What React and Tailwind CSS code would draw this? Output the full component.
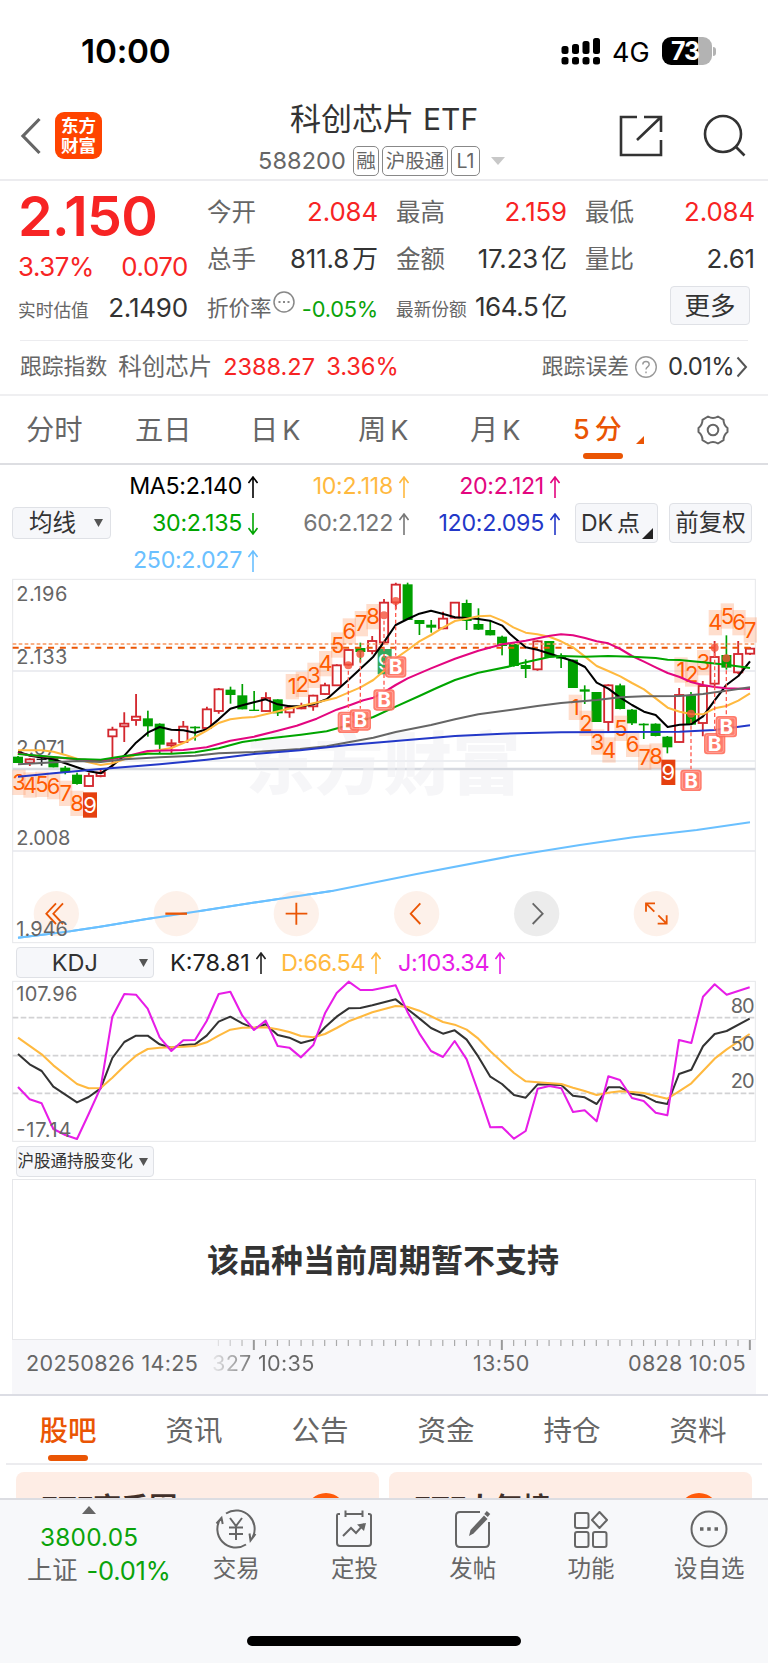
import clsx from 'clsx';

const STEP = 35.42;
const xAt = (i) => 54 + STEP * i;

// [kind, high, top, bottom, low]
const candles = [
  ['g', 558, 560, 579, 579], ['r', 565, 567, 579, 588], ['k', 558, 566, 570, 587], ['g', 560, 563, 592, 592],
  ['g', 588, 593, 607, 613], ['g', 608, 614, 642, 644], ['r', 608, 617, 649, 651], ['r', 600, 607, 619, 622],
  ['r', 470, 478, 500, 590], ['r', 427, 460, 470, 516], ['r', 372, 439, 451, 467], ['g', 422, 445, 469, 500],
  ['g', 460, 461, 524, 550], ['r', 508, 519, 527, 552], ['r', 453, 469, 517, 519], ['g', 469, 470, 475, 512],
  ['r', 410, 417, 475, 478], ['r', 354, 357, 424, 431], ['g', 350, 359, 375, 401], ['g', 342, 376, 418, 418],
  ['g', 363, 419, 423, 423], ['r', 367, 383, 424, 426], ['g', 388, 388, 430, 438], ['r', 405, 412, 428, 443],
  ['r', 398, 409, 416, 418], ['r', 374, 376, 410, 422], ['r', 338, 345, 373, 375], ['r', 283, 285, 347, 348],
  ['r', 236, 239, 285, 287], ['g', 218, 234, 246, 277], ['r', 198, 212, 244, 253], ['r', 87, 97, 218, 220],
  ['r', 38, 43, 98, 118], ['g', 38, 43, 150, 150], ['g', 150, 150, 162, 195], ['g', 150, 164, 173, 188],
  ['r', 125, 145, 176, 178], ['r', 96, 97, 144, 146], ['g', 89, 99, 153, 180], ['g', 115, 162, 179, 180],
  ['g', 152, 180, 196, 196], ['g', 197, 200, 228, 256], ['g', 220, 222, 288, 290], ['g', 268, 285, 297, 324],
  ['r', 211, 213, 299, 302], ['g', 213, 213, 262, 263], ['g', 250, 261, 266, 294], ['g', 269, 269, 354, 354],
  ['g', 346, 358, 365, 402], ['g', 366, 366, 456, 456], ['r', 343, 345, 457, 483], ['g', 341, 346, 417, 418],
  ['g', 417, 419, 460, 465], ['g', 460, 461, 466, 507], ['g', 460, 461, 498, 499], ['g', 498, 500, 532, 550],
  ['r', 354, 374, 517, 518], ['g', 366, 376, 464, 465], ['r', 333, 347, 460, 499], ['r', 213, 260, 342, 350],
  ['g', 196, 255, 293, 299], ['r', 213, 251, 308, 312], ['r', 231, 235, 252, 255],
];

const averages = [
  { color: '#000000', points: '54,545 90,557 160,568 196,580 231,592 266,604 302,610 337,587 373,557 408,518 443,488 479,471 514,479 550,481 585,488 620,478 656,448 691,416 727,406 762,397 797,388 833,403 868,409 903,409 940,403 980,388 1045,330 1120,260 1155,212 1187,165 1223,147 1258,131 1293,122 1330,132 1365,142 1400,144 1435,147 1470,152 1507,167 1530,192 1544,204 1577,232 1612,239 1683,262 1719,273 1755,291 1790,338 1825,356 1861,383 1896,405 1932,425 1967,435 2003,471 2039,464 2073,463 2109,439 2144,391 2179,345 2215,318 2250,274' },
  { color: '#ffb93f', points: '54,541 125,541 160,545 196,555 231,566 266,577 302,585 337,580 373,568 408,554 443,546 479,540 514,534 550,519 585,501 620,482 656,459 691,448 727,443 762,441 797,433 850,420 903,408 960,395 1010,383 1045,368 1080,353 1120,330 1155,300 1187,265 1223,240 1258,214 1293,195 1330,172 1365,153 1400,146 1435,139 1470,137 1507,152 1540,172 1577,188 1612,193 1648,200 1683,214 1719,232 1755,260 1790,288 1825,303 1861,319 1896,339 1932,358 1967,385 2003,413 2039,425 2073,432 2109,433 2144,415 2179,408 2215,392 2250,370' },
  { color: '#e3067f', points: '54,550 90,556 160,562 231,568 302,573 373,560 443,543 550,540 620,532 691,512 762,500 833,482 890,467 950,446 1010,419 1045,407 1090,391 1120,383 1155,365 1187,345 1223,325 1293,295 1365,266 1435,242 1507,223 1577,212 1650,197 1683,193 1719,196 1755,204 1790,214 1825,220 1861,237 1896,258 1932,275 1967,292 2003,309 2039,321 2073,336 2109,345 2144,351 2179,355 2250,357' },
  { color: '#00a500', points: '54,552 125,558 231,567 302,569 373,558 443,551 514,551 585,547 656,535 727,516 797,506 903,494 980,484 1045,466 1120,441 1187,410 1258,378 1310,354 1365,330 1435,308 1530,289 1577,277 1648,261 1683,258 1755,260 1825,258 1896,260 1967,264 2003,269 2039,270 2109,277 2179,284 2250,294' },
  { color: '#666666', points: '54,583 125,579 231,573 302,576 373,568 479,562 585,557 656,550 762,546 900,537 980,529 1045,517 1120,503 1187,486 1293,465 1365,448 1435,433 1530,420 1612,408 1683,399 1790,390 1861,382 1932,379 2039,378 2109,372 2179,362 2250,352' },
  { color: '#2338c8', points: '54,620 160,610 302,597 479,583 620,569 762,552 900,541 1045,525 1187,513 1365,498 1507,491 1683,487 1861,486 2039,485 2144,480 2250,466' },
  { color: '#6ac0ff', points: '54,1103 200,1085 300,1070 440,1047 600,1023 780,995 1000,962 1250,912 1530,859 1740,825 1900,802 2090,780 2250,757' },
];

const marks = [
  [3, 57, 637], [4, 90, 645], [5, 126, 643], [6, 161, 650], [7, 197, 670], [8, 231, 700],
  [1, 877, 350], [2, 907, 343], [3, 942, 316], [4, 977, 281], [5, 1013, 225], [6, 1048, 183], [7, 1084, 161], [8, 1119, 140],
  [1, 1726, 412], [2, 1758, 460], [3, 1793, 516], [4, 1827, 540], [5, 1863, 475], [6, 1898, 523], [7, 1934, 562], [8, 1968, 558],
  [1, 2043, 300], [2, 2075, 312], [3, 2111, 278], [4, 2146, 158], [5, 2182, 138], [6, 2217, 158], [7, 2251, 180],
];

const nines = [
  { x: 270, y: 705, fill: '#e5400f' },
  { x: 1154, y: 275, fill: '#33a95c' },
  { x: 2005, y: 607, fill: '#e5400f' },
];

// x, y of the dot, y of the badge
const buys = [
  [1045, 286, 457], [1081, 252, 450], [1152, 136, 390], [1187, 93, 291],
  [2073, 431, 631], [2144, 233, 521], [2179, 265, 470],
];

const kdj = [
  { color: '#333333', points: '54,342 89,373 125,393 160,440 196,464 231,487 266,471 302,445 337,354 373,306 408,287 443,287 479,313 514,323 550,315 585,313 620,287 656,245 691,230 727,250 762,265 797,253 833,285 868,293 903,309 940,299 975,262 1010,230 1046,205 1081,204 1117,196 1187,178 1222,207 1258,235 1293,264 1329,281 1364,271 1400,299 1435,350 1471,410 1506,432 1542,465 1577,473 1613,433 1684,435 1719,467 1754,472 1790,492 1825,442 1860,442 1896,461 1931,467 1967,485 2002,492 2037,402 2074,389 2109,319 2144,282 2180,273 2249,236' },
  { color: '#ffb93f', points: '54,293 125,343 160,376 231,432 266,445 302,444 337,413 373,378 408,347 443,327 479,323 550,320 585,318 620,307 656,287 691,269 727,263 797,262 833,268 868,276 903,288 940,292 975,282 1010,264 1046,244 1117,217 1187,198 1222,200 1258,212 1329,246 1364,254 1400,269 1435,296 1471,334 1542,399 1577,424 1613,427 1684,432 1719,443 1754,453 1790,465 1825,458 1860,454 1896,456 1931,459 2002,476 2037,454 2074,430 2144,356 2180,328 2249,282' },
  { color: '#e71de7', points: '54,441 89,478 125,490 160,567 196,585 231,597 266,522 302,443 337,230 373,162 408,164 443,206 479,292 514,333 550,301 585,300 620,243 656,162 691,155 727,227 762,270 797,242 833,318 868,323 903,352 940,315 975,220 1010,159 1046,125 1081,150 1117,150 1187,136 1222,215 1258,280 1293,333 1329,351 1364,303 1400,358 1435,456 1471,562 1506,561 1542,596 1577,573 1613,446 1648,438 1684,445 1719,516 1754,511 1790,544 1825,409 1860,420 1896,474 1931,483 1967,518 2002,526 2037,300 2074,309 2109,170 2144,133 2180,164 2249,142' },
];

function App() {
  return (
    <div className="relative flex h-[1663px] w-[768px] flex-col overflow-hidden bg-white font-['Inter','Noto_Sans_CJK_SC',sans-serif] text-[#666]">
      <StatusBar />
      <Header />
      <Quote />
      <TrackRow />
      <PeriodTabs />
      <MaLegend />
      <PriceChart />
      <KdjRow />
      <KdjChart />
      <Unsupported />
      <TimeAxis />
      <InfoTabs />
      <Cards />
      <BottomBar />
    </div>
  );
}

export default App;

const Down = ({ className }) => (
  <svg viewBox="0 0 10 10" preserveAspectRatio="none" className={clsx('shrink-0 fill-current', className)}>
    <path d="M0 0h10L5 10z" />
  </svg>
);

const Arrow = ({ down }) => (
  <svg viewBox="0 0 10 22" className={clsx('ml-[6px] h-[22px] w-[10px] shrink-0 fill-none stroke-current', down && 'rotate-180')} strokeWidth="1.6">
    <path d="M5 22V1M.5 7L5 1l4.500 6" />
  </svg>
);

function StatusBar() {
  return (
    <div className="flex h-[100px] shrink-0 items-start">
      <div className="ml-[81px] mt-[31px] h-10 w-[480px] text-[33.3px]/[40px] font-semibold tracking-[-0.2px] text-black">10:00</div>
      <svg viewBox="0 0 40 28" className="mt-[37px] h-7 w-10 fill-black">
        <rect x="0.500" y="9" width="7" height="8" rx="2.500" />
        <rect x="11" y="7" width="7" height="10" rx="2.500" />
        <rect x="21.500" y="4" width="7" height="13" rx="2.500" />
        <rect x="32" y="1" width="7" height="16" rx="2.500" />
        <rect x="0.500" y="20" width="7" height="7.500" rx="2.500" />
        <rect x="11" y="20" width="7" height="7.500" rx="2.500" />
        <rect x="21.500" y="20" width="7" height="7.500" rx="2.500" />
        <rect x="32" y="20" width="7" height="7.500" rx="2.500" />
      </svg>
      <div className="ml-[11px] mt-[38px] w-[50px] text-[27px]/[30px] text-black">4G</div>
      <div className="mt-[37px] flex h-7 w-[50px] items-center rounded-[9px] bg-[linear-gradient(90deg,#000_72%,#b3b3b3_72%)] pl-[9px] text-[25px]/[28px] font-bold tracking-[-1px] text-white">73</div>
      <div className="ml-px mt-[47px] h-[9px] w-[3px] rounded-r-full bg-[#b3b3b3]" />
    </div>
  );
}

function Header() {
  return (
    <div className="flex h-[81px] shrink-0 border-b-2 border-[#ececef]">
      <svg viewBox="0 0 22 38" className="ml-5 mt-[17px] h-[38px] w-[22px] fill-none stroke-[#666]" strokeWidth="3.200">
        <path d="M19.500 2L3 19l16.500 17" />
      </svg>
      <div className="ml-[13px] mt-3 flex h-[47px] w-[47px] flex-col items-center justify-center rounded-[9px] bg-[#ff4400] text-[17.5px]/[20px] font-bold text-white">
        <span>东方</span>
        <span>财富</span>
      </div>
      <div className="ml-[156px] flex w-[250px] flex-col items-start">
        <div className="ml-[32px] mt-[1px] flex h-9 items-center text-[31px] text-[#333]">
          科创芯片<span className="ml-[9px] text-[30px]">ETF</span>
        </div>
        <div className="mt-[6px] flex h-9 items-center">
          <span className="w-[95px] text-[23.5px] tracking-[0.1px]">588200</span>
          <Tag className="w-[26px]">融</Tag>
          <Tag className="ml-[3px] w-[66px]">沪股通</Tag>
          <Tag className="ml-[3px] w-[29px]">L1</Tag>
          <Down className="ml-[11px] h-2 w-[14px] text-[#c8c8c8]" />
        </div>
      </div>
      <svg viewBox="0 0 46 46" className="ml-[110px] mt-3 h-[46px] w-[46px] fill-none stroke-[#333]" strokeWidth="2.600">
        <path d="M19 5H3v38h40V28M26 5h17v15M43 5L19 28" />
      </svg>
      <svg viewBox="0 0 46 46" className="ml-[38px] mt-3 h-[46px] w-[46px] fill-none stroke-[#333]" strokeWidth="2.600">
        <circle cx="21" cy="22" r="18" />
        <path d="M33.500 34.500l9 9" />
      </svg>
    </div>
  );
}

const Tag = ({ className, children }) => (
  <span className={clsx('flex h-[30px] items-center justify-center rounded-[5px] border-[1.5px] border-[#888] text-[19.5px]/[28px] whitespace-nowrap', className)}>{children}</span>
);

const Cell = ({ label, value, className }) => (
  <div className="flex h-[47px] items-center justify-between text-[24.5px] whitespace-nowrap">
    <span>{label}</span>
    <span className={clsx('text-[25.8px] tracking-[-0.1px] [word-spacing:-4px]', className)}>{value}</span>
  </div>
);

function Quote() {
  return (
    <div className="flex h-[159px] shrink-0 pl-[18px] text-[#666]">
      <div className="w-[170px]">
        <div className="mt-2 h-[54px] text-[55.5px]/[54px] font-semibold tracking-[-0.6px] text-[#f72424]">2.150</div>
        <div className="mt-[6px] flex h-9 items-center justify-between text-[25.8px] tracking-[-0.4px] text-[#f72424]">
          <span>3.37%</span>
          <span>0.070</span>
        </div>
        <div className="mt-[3px] flex h-[38px] items-center justify-between whitespace-nowrap">
          <span className="mt-2 text-[17.7px]">实时估值</span>
          <span className="text-[26px] tracking-[-0.2px] text-[#333]">2.1490</span>
        </div>
      </div>
      <div className="ml-[19px] mt-2 w-[171px]">
        <Cell label="今开" value="2.084" className="text-[#f72424]" />
        <Cell label="总手" value="811.8 万" className="text-[#333]" />
        <div className="flex h-[47px] items-center whitespace-nowrap">
          <span className="mt-1 text-[21.5px]">折价率</span>
          <svg viewBox="0 0 24 24" className="-mt-2.5 h-6 w-6 shrink-0 fill-none stroke-[#888]" strokeWidth="1.500">
            <circle cx="12" cy="12" r="10" />
            <path d="M6.500 12h2M11 12h2M15.500 12h2" strokeWidth="2" />
          </svg>
          <span className="mt-1.5 ml-auto text-[21.8px] tracking-[-0.2px] text-[#0aa30a]">-0.05%</span>
        </div>
      </div>
      <div className="ml-[18px] mt-2 w-[171px]">
        <Cell label="最高" value="2.159" className="text-[#f72424]" />
        <Cell label="金额" value="17.23 亿" className="text-[#333]" />
        <div className="flex h-[47px] items-center justify-between whitespace-nowrap">
          <span className="mt-2 text-[17.7px]">最新份额</span>
          <span className="text-[26px] tracking-[-0.4px] [word-spacing:-4px] text-[#333]">164.5 亿</span>
        </div>
      </div>
      <div className="ml-[18px] mt-2 w-[170px]">
        <Cell label="最低" value="2.084" className="text-[#f72424]" />
        <Cell label="量比" value="2.61" className="text-[#333]" />
        <button className="mt-[3px] ml-[85px] h-[39px] w-[80px] rounded-[4px] border-[1.5px] border-[#dfe1e6] bg-[#f6f7fa] text-[25.5px]/[34px] text-[#333]">更多</button>
      </div>
    </div>
  );
}

function TrackRow() {
  return (
    <div className="mx-5 flex h-[54px] shrink-0 items-center border-t-[1.5px] border-[#ececef] pb-[2px] whitespace-nowrap">
      <span className="text-[21.8px]">跟踪指数</span>
      <span className="ml-[11px] text-[23.5px]">科创芯片</span>
      <span className="ml-[11px] w-[103px] text-[23.5px] text-[#f72424]">2388.27</span>
      <span className="text-[23.7px] tracking-[-0.1px] text-[#f72424]">3.36%</span>
      <span className="ml-auto text-[21.8px]">跟踪误差</span>
      <svg viewBox="0 0 24 24" className="ml-[5px] h-6 w-6 fill-none stroke-[#999]" strokeWidth="1.400">
        <circle cx="12" cy="12" r="10.300" />
        <path d="M8.800 9.500c0-4 6.400-4 6.400 0 0 2.400-3.200 2.300-3.200 5M12 16.500v1.800" />
      </svg>
      <span className="ml-[10px] w-[68px] text-[23.8px] tracking-[-0.5px] text-[#333]">0.01%</span>
      <svg viewBox="0 0 12 22" className="h-[22px] w-3 fill-none stroke-[#555]" strokeWidth="2">
        <path d="M1.500 1.500l8.500 9.500-8.500 9.500" />
      </svg>
    </div>
  );
}

const PeriodTab = ({ className, children }) => (
  <button className={clsx('h-full shrink-0 pt-px text-left text-[28.3px] whitespace-nowrap', className)}>{children}</button>
);

function PeriodTabs() {
  return (
    <div className="flex h-[71px] shrink-0 items-center border-t-2 border-b-2 border-t-[#efeff1] border-b-[#dddee2] pl-[26px]">
      <PeriodTab className="w-[109px]">分时</PeriodTab>
      <PeriodTab className="w-[115px]">五日</PeriodTab>
      <PeriodTab className="w-[108px]">日<span className="ml-1 text-[27px]">K</span></PeriodTab>
      <PeriodTab className="w-[112px]">周<span className="ml-1 text-[27px]">K</span></PeriodTab>
      <PeriodTab className="w-[103px]">月<span className="ml-1 text-[27px]">K</span></PeriodTab>
      <div className="relative flex h-full w-[124px] items-center text-[#ea5504]">
        <span className="mt-px text-[27px] font-medium">5<span className="ml-[5px] text-[27px]">分</span></span>
        <svg viewBox="0 0 8 8" className="mt-[21px] ml-[14px] h-2 w-2 fill-current"><path d="M8 0v8H0z" /></svg>
        <div className="absolute bottom-[4px] left-[10px] h-[6px] w-[40px] rounded-[3px] bg-[#ea5504]" />
      </div>
      <svg viewBox="0 0 32 32" className="h-8 w-8 fill-none stroke-[#666]" strokeWidth="2" strokeLinejoin="round">
        <path d="M11 2.500Q16 5.500 21 2.500L26.500 5.800Q26.500 11 30.500 14V18Q26.500 21 26.500 26.200L21 29.500Q16 26.500 11 29.500L5.500 26.200Q5.500 21 1.500 18V14Q5.500 11 5.500 5.800Z" />
        <circle cx="16" cy="16" r="5.300" />
      </svg>
    </div>
  );
}

const Ma = ({ className, down, children }) => (
  <div className={clsx('flex h-[37px] items-center justify-end text-[23.2px] tracking-[-0.3px] whitespace-nowrap', className)}>
    {children}
    <Arrow down={down} />
  </div>
);

function MaLegend() {
  return (
    <div className="flex h-[112px] shrink-0 items-start pl-3">
      <button className="mt-[42px] flex h-8 w-[99px] items-center rounded-[4px] border-[1.5px] border-[#dfe1e6] bg-[#f6f7fa] pl-4 text-[23.5px]/[28px] whitespace-nowrap text-[#333]">
        均线
        <Down className="ml-[18px] h-2 w-[9px] text-[#555]" />
      </button>
      <div className="mt-[3px] grid w-[450px] grid-cols-[147px_151px_151px]">
        <Ma className="text-black">MA5:2.140</Ma>
        <Ma className="text-[#ffb93f]">10:2.118</Ma>
        <Ma className="text-[#e3067f]">20:2.121</Ma>
        <Ma className="text-[#00a500]" down>30:2.135</Ma>
        <Ma className="text-[#777]">60:2.122</Ma>
        <Ma className="text-[#2338c8]">120:2.095</Ma>
        <Ma className="text-[#6ac0ff]">250:2.027</Ma>
      </div>
      <button className="relative mt-[38px] ml-[14px] flex h-10 w-[83px] items-center rounded-[4px] border-[1.5px] border-[#dfe1e6] bg-[#f6f7fa] pl-[5px] text-[23px]/[36px] whitespace-nowrap text-[#333]">
        DK<span className="ml-1">点</span>
        <svg viewBox="0 0 10 10" className="absolute right-1 bottom-[3px] h-[11px] w-[11px] fill-[#222]"><path d="M10 0v10H0z" /></svg>
      </button>
      <button className="mt-[38px] ml-[11px] h-10 w-[83px] rounded-[4px] border-[1.5px] border-[#dfe1e6] bg-[#f6f7fa] text-[23.5px]/[36px] whitespace-nowrap text-[#333]">前复权</button>
    </div>
  );
}

const Candle = ({ i, data: [kind, high, top, bottom, low] }) => {
  const x = xAt(i);
  if (kind === 'r') {
    return (
      <g stroke="#d3272e" strokeWidth="5.500" fill="none">
        <path d={`M${x} ${high}V${top}M${x} ${bottom}V${low}`} />
        <rect x={x - 12.5} y={top + 1} width="25" height={Math.max(bottom - top - 2, 2)} />
      </g>
    );
  }
  const color = kind === 'k' ? '#222' : '#00a000';
  return (
    <g fill={color}>
      <rect x={x - 2.5} y={high} width="5" height={low - high} />
      <rect x={x - 15} y={top} width="30" height={bottom - top} />
    </g>
  );
};

const AxisText = ({ x = 49, y, width, children }) => (
  <text x={x} y={y} fontSize="60" fill="#666" textLength={width} lengthAdjust="spacing">{children}</text>
);

const Lines = ({ items }) =>
  items.map((line) => (
    <polyline key={line.color} points={line.points} fill="none" stroke={line.color} strokeWidth="6.200" strokeLinejoin="round" />
  ));

function PriceChart() {
  return (
    <svg viewBox="0 21 2304 1101" className="h-[367px] w-[768px] shrink-0">
      <rect x="38" y="28" width="2228" height="1090" fill="none" stroke="#e6e7ea" strokeWidth="3" />
      <g stroke="#e6e8ed">
        <path d="M38 303H2266M38 843H2266" strokeWidth="5" />
        <path d="M38 573H2266" strokeWidth="4" />
        <path d="M38 597H2266" stroke="#d6d9e0" strokeWidth="7" />
      </g>
      <text x="738" y="657" fontSize="205" fontWeight="900" fill="#efeff2" fillOpacity=".55" textLength="824">东方财富</text>
      <AxisText y="94" width="153">2.196</AxisText>
      <AxisText y="282" width="153">2.133</AxisText>
      <AxisText y="554" width="146">2.071</AxisText>
      <AxisText y="825" width="162">2.008</AxisText>
      <g>
        {candles.map((c, i) => (
          <Candle key={i} i={i} data={c} />
        ))}
      </g>
      <path d="M38 222H2266" stroke="#f7965f" strokeWidth="5" strokeDasharray="11 7" />
      <path d="M38 233H2266" stroke="#ea5504" strokeWidth="6" strokeDasharray="18 17.400" />
      <g fontSize="66" textAnchor="middle">
        {marks.map(([n, x, y], i) => (
          <g key={i}>
            <rect x={x - 20} y={y - 38} width="40" height="76" fill="#ff8a4c" fillOpacity=".28" />
            <text x={x} y={y + 23} fill="#ff5a00">{n}</text>
          </g>
        ))}
        {nines.map(({ x, y, fill }) => (
          <g key={x}>
            <rect x={x - 21} y={y - 38} width="42" height="76" fill={fill} />
            <text x={x} y={y + 24} fill="#fff">9</text>
          </g>
        ))}
      </g>
      <Lines items={averages} />
      {buys.map(([x, dot, y]) => (
        <g key={x}>
          <path d={`M${x} ${dot + 16}V${y - 34}`} stroke="#ff5b50" strokeWidth="4" strokeDasharray="12 8" />
          <circle cx={x} cy={dot} r="12" fill="#f5503a" fillOpacity=".8" />
          <rect x={x - 32} y={y - 32} width="64" height="64" rx="10" fill="#ff6a58" fillOpacity=".88" />
          <rect x={x - 26} y={y - 26} width="52" height="52" rx="6" fill="none" stroke="#fff" strokeOpacity=".3" strokeWidth="3" />
          <text x={x} y={y + 22} fontSize="62" fontWeight="700" textAnchor="middle" fill="#fff">B</text>
        </g>
      ))}
      <g fill="#fdeee6" fillOpacity=".85">
        <circle cx="169" cy="1031" r="68" />
        <circle cx="529" cy="1031" r="68" />
        <circle cx="889" cy="1031" r="68" />
        <circle cx="1250" cy="1031" r="68" />
        <circle cx="1610" cy="1031" r="68" fill="#e9e9e9" />
        <circle cx="1969" cy="1031" r="68" />
      </g>
      <polyline points="54,1103 200,1085 300,1070 440,1047 600,1023 780,995 1000,962" fill="none" stroke="#6ac0ff" strokeWidth="6" />
      <g fill="none" stroke="#ea5504" strokeWidth="5.500">
        <path d="M168 1000L139 1031L168 1062M189 1000L160 1031L189 1062" />
        <path d="M496 1031H561" strokeWidth="7" />
        <path d="M857 1031H922M889 998V1064" />
        <path d="M1261 1000L1232 1031L1261 1062" />
        <path d="M1598 1000L1628 1031L1598 1062" stroke="#666" />
        <path d="M1938 1025V1000H1965M1938 1000L1963 1025M2000 1036V1061H1973M2000 1061L1975 1036" />
      </g>
      <AxisText y="1098" width="155">1.946</AxisText>
    </svg>
  );
}

const Select = ({ className, children }) => (
  <button className={clsx('flex w-[138px] shrink-0 items-center justify-end rounded-[4px] border-[1.5px] border-[#dfe1e6] bg-[#f6f7fa] pr-[5px] whitespace-nowrap text-[#333]', className)}>
    {children}
    <Down className="h-2 w-[9px] text-[#555]" />
  </button>
);

function KdjRow() {
  return (
    <div className="flex h-[34px] shrink-0 items-end pl-[16px] text-[23.5px]/[31px]">
      <Select className="h-[31px] gap-[41px] text-[23.5px]/[28px]">KDJ</Select>
      <div className="ml-[16px] flex w-[111px] items-center text-[#222]">K:78.81<Arrow /></div>
      <div className="flex w-[117px] items-center tracking-[-0.6px] text-[#ffb93f]">D:66.54<Arrow /></div>
      <div className="flex items-center tracking-[-0.4px] text-[#e71de7]">J:103.34<Arrow /></div>
    </div>
  );
}

function KdjChart() {
  return (
    <svg viewBox="0 114 2304 495" className="h-[165px] w-[768px] shrink-0">
      <rect x="38" y="124" width="2228" height="480" fill="none" stroke="#e6e7ea" strokeWidth="3" />
      <path d="M38 233H2266M38 347H2266M38 460H2266" stroke="#d2d2d4" strokeWidth="5" strokeDasharray="17 7" />
      <AxisText y="182" width="183">107.96</AxisText>
      <Lines items={kdj} />
      <AxisText y="590" width="165">-17.14</AxisText>
      <AxisText x={2192} y="219" width="72">80</AxisText>
      <AxisText x={2192} y="333" width="72">50</AxisText>
      <AxisText x={2192} y="445" width="72">20</AxisText>
    </svg>
  );
}

function Unsupported() {
  return (
    <div className="flex h-[197px] shrink-0 flex-col px-3">
      <Select className="mt-[3px] ml-[4px] h-[31px] gap-[6px] text-[16.5px]">沪股通持股变化</Select>
      <div className="mt-[2px] flex flex-1 items-center justify-center border-[1.5px] border-[#e6e7ea] pt-[2px] pr-[2px] text-[32px] font-bold text-[#333]">该品种当前周期暂不支持</div>
    </div>
  );
}

const ticks = Array.from({ length: 46 }, (_, n) => n);

function TimeAxis() {
  return (
    <div className="mx-3 flex h-[54px] shrink-0 flex-col bg-[#f7f7fa] text-[21.6px] tracking-[0.3px]">
      <svg viewBox="0 0 744 10" className="h-[10px] w-[744px] shrink-0">
        {ticks.map((n) => {
          const big = n % 21 === 3;
          const x = 206.4 + n * 11.81;
          return <path key={n} d={`M${x} 0V${big ? 10 : 6}`} stroke={big ? '#999' : '#aaa'} strokeWidth={big ? 2 : 1.2} strokeOpacity={Math.min(1, 0.3 + n * 0.25)} />;
        })}
      </svg>
      <div className="-mt-px flex h-7 items-center whitespace-nowrap">
        <span className="ml-[14px] w-[186px]">20250826 14:25</span>
        <span className="w-[261px] bg-[linear-gradient(90deg,#66666618_0px,#666_45px)] bg-clip-text text-transparent">327 10:35</span>
        <span>13:50</span>
        <span className="mr-[10px] ml-auto">0828 10:05</span>
      </div>
    </div>
  );
}

function InfoTabs() {
  return (
    <div className="shrink-0 border-t-2 border-[#dcdde4]">
      <div className="mx-[6px] grid h-[69px] grid-cols-6 border-b-2 border-[#ececef] text-[28.5px]">
        {['股吧', '资讯', '公告', '资金', '持仓', '资料'].map((name, i) => (
          <button key={name} className={clsx('relative flex items-center justify-center pt-[3px] pr-[2px]', i === 0 && 'font-medium text-[#ea5504]')}>
            {name}
            {i === 0 && <span className="absolute bottom-[2px] h-[6px] w-10 rounded-[3px] bg-[#ea5504]" />}
          </button>
        ))}
      </div>
    </div>
  );
}

const Card = ({ title }) => (
  <div className="flex h-[60px] flex-1 items-start justify-between rounded-t-[8px] bg-[#feede5] pl-[25px]">
    <span className="mt-[18px] text-[28px]/[36px] font-bold text-[#41302a]">{title}</span>
    <span className="mt-[21px] mr-[33px] h-10 w-10 rounded-full bg-[#ff5a0a]" />
  </div>
);

function Cards() {
  return (
    <div className="flex h-[33px] shrink-0 gap-[10px] overflow-hidden px-4 pt-[7px]">
      <Card title="ETF高手圈" />
      <Card title="ETF人气榜" />
    </div>
  );
}

const NavItem = ({ label, children }) => (
  <button className="flex w-[118.3px] shrink-0 flex-col items-center text-[23.5px] whitespace-nowrap">
    <svg viewBox="0 0 44 44" className="mt-[7px] h-11 w-11 fill-none stroke-[#666]" strokeWidth="2">
      {children}
    </svg>
    <span className="h-9 leading-[36px]">{label}</span>
  </button>
);

function BottomBar() {
  return (
    <div className="flex flex-1 flex-col border-t-2 border-[#dcdde2] bg-[#f7f8fa]">
      <div className="flex h-[136px]">
        <div className="flex w-[177px] shrink-0 flex-col">
          <svg viewBox="0 0 14 8" className="mt-[6px] ml-[82px] h-2 w-[14px] fill-[#666]"><path d="M7 0l7 8H0z" /></svg>
          <span className="mt-[5px] ml-10 h-[34px] text-[24.4px]/[36px] tracking-[0.2px] text-[#0aa30a]">3800.05</span>
          <span className="ml-[27px] flex h-9 items-center text-[25.2px] whitespace-nowrap">
            上证<span className="ml-[9px] text-[25.5px] tracking-[-0.2px] text-[#0aa30a]">-0.01%</span>
          </span>
        </div>
        <NavItem label="交易">
          <path d="M12 6.500A18.500 18.500 0 0 1 37 33M41.500 27l-5 6.500-1-7M32 37.500A18.500 18.500 0 0 1 7 11M2.500 16.500L7.500 11l1.200 6" />
          <path d="M16 11l6 8 6-8M22 19v14M15 20.500h14M15 27h14" />
        </NavItem>
        <NavItem label="定投">
          <path d="M8 7H6Q5 7 5 8.500V36Q5 39 8 39H36Q39 39 39 36V8.500Q39 7 37 7H36M13.500 7H30.500M13.500 3.500V10M30.500 3.500V10" />
          <path d="M11 29l8-8 5 5 8-9" />
          <path d="M25 17.500l9-1.500-2 8z" fill="#666" stroke="none" />
        </NavItem>
        <NavItem label="发帖">
          <path d="M29 5H9Q5 5 5 9V36Q5 40 9 40H34Q38 40 38 36V15" />
          <path d="M18 29l1.500-6L33 8.500l3.500 3.500L22.500 26.500z" fill="#666" stroke="none" />
          <path d="M35 8.500l2.500-3" strokeWidth="4.500" />
        </NavItem>
        <NavItem label="功能">
          <rect x="6" y="6" width="13.500" height="15" rx="2" />
          <rect x="6" y="25" width="13.500" height="15" rx="2" />
          <rect x="24" y="25" width="13.500" height="15" rx="2" />
          <path d="M30.500 5l7.500 8-7.500 8-7.500-8z" strokeLinejoin="round" />
        </NavItem>
        <NavItem label="设自选">
          <circle cx="22" cy="22" r="17.500" />
          <path d="M13 22h3.500M20.200 22h3.500M27.500 22h3.500" strokeWidth="3.500" />
        </NavItem>
      </div>
      <div className="ml-[247px] h-[10px] w-[274px] rounded-full bg-black" />
    </div>
  );
}
